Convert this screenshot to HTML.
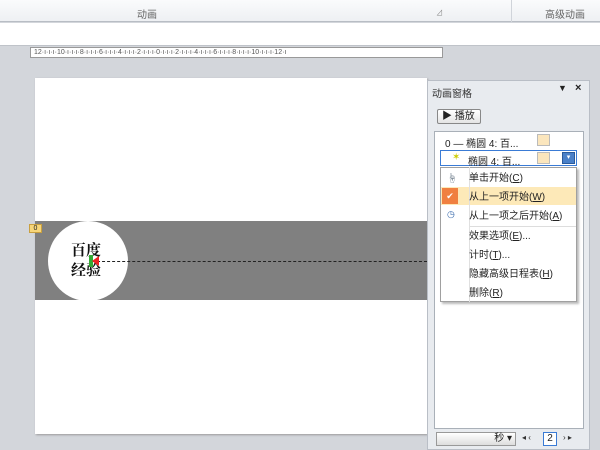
<!DOCTYPE html>
<html><head><meta charset="utf-8"><style>
*{margin:0;padding:0;box-sizing:border-box}
body{width:600px;height:450px;overflow:hidden;position:relative;background:#d3d6db;font-family:"Liberation Sans","Noto Sans CJK SC",sans-serif;font-size:10px;color:#222}
.a{position:absolute}
</style></head><body>
<div class="a" style="left:0;top:0;width:600px;height:22px;background:linear-gradient(#fafbfc,#eef0f3);border-bottom:1px solid #b8bdc4"></div>
<div class="a" style="left:137px;top:6px;color:#666;font-size:10px">动画</div>
<div class="a" style="left:436px;top:8px;color:#888;font-size:7px">⊿</div>
<div class="a" style="left:511px;top:0;width:1px;height:22px;background:#d0d4da"></div>
<div class="a" style="left:545px;top:6px;color:#666;font-size:10px">高级动画</div>
<div class="a" style="left:0;top:23px;width:600px;height:22px;background:#fff"></div>
<div class="a" style="left:0;top:45px;width:600px;height:1px;background:#bfc3c9"></div>
<div class="a" style="left:30px;top:47px;width:413px;height:11px;background:#fff;border:1px solid #999;font-size:7px;color:#555;white-space:nowrap;overflow:hidden;line-height:9px;padding-left:3px">12·ı·ı·ı·10·ı·ı·ı·8·ı·ı·ı·6·ı·ı·ı·4·ı·ı·ı·2·ı·ı·ı·0·ı·ı·ı·2·ı·ı·ı·4·ı·ı·ı·6·ı·ı·ı·8·ı·ı·ı·10·ı·ı·ı·12·ı</div>
<div class="a" style="left:35px;top:78px;width:392px;height:356px;background:#fff;box-shadow:1px 1px 2px #999"></div>
<div class="a" style="left:35px;top:221px;width:392px;height:79px;background:#808080"></div>
<div class="a" style="left:48px;top:221px;width:80px;height:80px;border-radius:50%;background:#fff"></div>
<div class="a" style="left:71px;top:240px;font-size:15px;font-weight:bold;color:#111;line-height:20px;font-family:'Noto Serif CJK SC',serif">百度<br>经验</div>
<div class="a" style="left:92px;top:261px;width:335px;border-top:1px dashed #222"></div>
<div class="a" style="left:89px;top:255px;width:4px;height:12px;background:#3a3"></div>
<div class="a" style="left:92px;top:256px;width:0;height:0;border-top:5px solid transparent;border-bottom:5px solid transparent;border-right:7px solid #e22"></div>
<div class="a" style="left:29px;top:224px;width:13px;height:9px;background:#f7d67a;border:1px solid #c9a040;font-size:7px;line-height:7px;text-align:center">0</div>
<div class="a" style="left:427px;top:80px;width:163px;height:370px;background:#e8ebef;border:1px solid #b9bec6"></div>
<div class="a" style="left:432px;top:85px;font-size:10px;color:#333">动画窗格</div>
<div class="a" style="left:558px;top:83px;font-size:9px">▼</div>
<div class="a" style="left:575px;top:82px;font-size:11px;font-weight:bold">×</div>
<div class="a" style="left:437px;top:109px;width:44px;height:15px;border:1px solid #888;border-radius:2px;background:linear-gradient(#fff,#e4e4e4);font-size:10px;line-height:13px;padding-left:4px">▶ 播放</div>
<div class="a" style="left:434px;top:131px;width:150px;height:298px;background:#fff;border:1px solid #a9b0b8"></div>
<div class="a" style="left:445px;top:135px;font-size:10px;white-space:pre">0 — 椭圆 4: 百...</div>
<div class="a" style="left:537px;top:134px;width:13px;height:12px;background:#fbe6bd;border:1px solid #bbb"></div>
<div class="a" style="left:440px;top:150px;width:137px;height:16px;border:1px solid #3a7bd5;background:#fff"></div>
<div class="a" style="left:452px;top:152px;font-size:10px;color:#cc0">✶</div>
<div class="a" style="left:468px;top:153px;font-size:10px">椭圆 4: 百...</div>
<div class="a" style="left:537px;top:152px;width:13px;height:12px;background:#fbe6bd;border:1px solid #bbb"></div>
<div class="a" style="left:562px;top:152px;width:13px;height:12px;background:#4a80c8;border:1px solid #2a5a9a;color:#fff;font-size:7px;text-align:center;line-height:10px">▾</div>
<div class="a" style="left:440px;top:167px;width:137px;height:135px;background:#fff;border:1px solid #a0a0a0;box-shadow:2px 2px 2px #bbb"></div>
<div class="a" style="left:441px;top:187px;width:135px;height:18px;background:#fde9b8"></div>
<div class="a" style="left:442px;top:188px;width:16px;height:16px;background:#f08040;color:#fff;font-size:9px;text-align:center;line-height:16px">✔</div>
<div class="a" style="left:469px;top:167px;width:1px;height:135px;background:#e0e0e0"></div>
<div class="a" style="left:447px;top:170px;font-size:10px;color:#567">☝</div>
<div class="a" style="left:447px;top:209px;font-size:9px;color:#36a">◷</div>
<div class="a" style="left:470px;top:226px;width:106px;height:1px;background:#ddd"></div>
<div class="a" style="left:469px;top:169px;font-size:10px;line-height:19.2px;color:#222">单击开始(<u>C</u>)<br>从上一项开始(<u>W</u>)<br>从上一项之后开始(<u>A</u>)<br>效果选项(<u>E</u>)...<br>计时(<u>T</u>)...<br>隐藏高级日程表(<u>H</u>)<br>删除(<u>R</u>)</div>
<div class="a" style="left:436px;top:432px;width:80px;height:14px;border:1px solid #999;background:linear-gradient(#fff,#ddd);font-size:10px;text-align:right;padding-right:3px;line-height:12px">秒 ▾</div>
<div class="a" style="left:522px;top:433px;font-size:8px;color:#333">◂ ‹</div>
<div class="a" style="left:543px;top:432px;width:14px;height:14px;border:1px solid #3a7bd5;background:#fff;font-size:10px;text-align:center;line-height:12px">2</div>
<div class="a" style="left:563px;top:433px;font-size:8px;color:#333">› ▸</div>
</body></html>
